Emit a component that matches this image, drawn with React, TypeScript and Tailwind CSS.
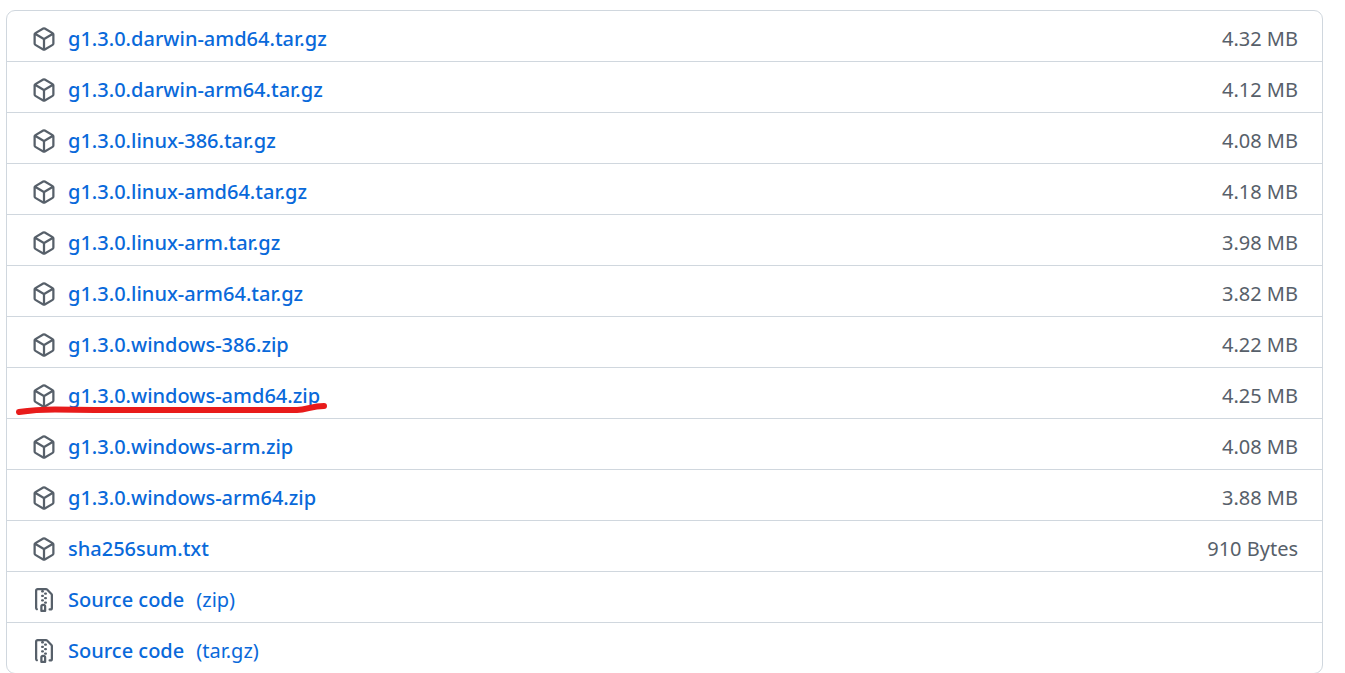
import React from 'react';

interface Asset {
  name: string;
  size?: string;
  format?: string;
  marked?: boolean;
}

const assets: Asset[] = [
  { name: 'g1.3.0.darwin-amd64.tar.gz', size: '4.32 MB' },
  { name: 'g1.3.0.darwin-arm64.tar.gz', size: '4.12 MB' },
  { name: 'g1.3.0.linux-386.tar.gz', size: '4.08 MB' },
  { name: 'g1.3.0.linux-amd64.tar.gz', size: '4.18 MB' },
  { name: 'g1.3.0.linux-arm.tar.gz', size: '3.98 MB' },
  { name: 'g1.3.0.linux-arm64.tar.gz', size: '3.82 MB' },
  { name: 'g1.3.0.windows-386.zip', size: '4.22 MB' },
  { name: 'g1.3.0.windows-amd64.zip', size: '4.25 MB', marked: true },
  { name: 'g1.3.0.windows-arm.zip', size: '4.08 MB' },
  { name: 'g1.3.0.windows-arm64.zip', size: '3.88 MB' },
  { name: 'sha256sum.txt', size: '910 Bytes' },
  { name: 'Source code', format: '(zip)' },
  { name: 'Source code', format: '(tar.gz)' },
];

const PackageIcon: React.FC = () => (
  <svg viewBox="0 0 16 16" fill="currentColor" aria-hidden="true" className="size-6 shrink-0 text-[#57606a]">
    <path d="m8.878.392 5.25 3.045c.54.314.872.89.872 1.514v6.098a1.75 1.75 0 0 1-.872 1.514l-5.25 3.045a1.75 1.75 0 0 1-1.756 0l-5.25-3.045A1.75 1.75 0 0 1 1 11.049V4.951c0-.624.332-1.201.872-1.514L7.122.392a1.75 1.75 0 0 1 1.756 0ZM7.875 1.69l-4.63 2.685L8 7.133l4.755-2.758-4.63-2.685a.248.248 0 0 0-.25 0ZM2.5 5.677v5.372c0 .09.047.171.125.216l4.625 2.683V8.432Zm6.25 8.271 4.625-2.683a.25.25 0 0 0 .125-.216V5.677L8.75 8.432Z" />
  </svg>
);

const FileZipIcon: React.FC = () => (
  <svg viewBox="0 0 16 16" fill="currentColor" aria-hidden="true" className="size-6 shrink-0 text-[#57606a]">
    <path d="M3.5 1.75v11.5c0 .09.048.173.126.217a.75.75 0 0 1-.752 1.298A1.748 1.748 0 0 1 2 13.25V1.75C2 .784 2.784 0 3.75 0h5.586c.464 0 .909.185 1.237.513l2.914 2.914c.329.328.513.773.513 1.237v8.586A1.75 1.75 0 0 1 12.25 15h-.5a.75.75 0 0 1 0-1.5h.5a.25.25 0 0 0 .25-.25V4.664a.25.25 0 0 0-.073-.177L9.513 1.573a.25.25 0 0 0-.177-.073H7.25a.75.75 0 0 1 0 1.5h-.5a.75.75 0 0 1 0-1.5h-3a.25.25 0 0 0-.25.25Zm3.75 8.75h.5c.966 0 1.75.784 1.75 1.75v3a.75.75 0 0 1-.75.75h-2.5a.75.75 0 0 1-.75-.75v-3c0-.966.784-1.75 1.75-1.75ZM6 5.25a.75.75 0 0 1 .75-.75h.5a.75.75 0 0 1 0 1.5h-.5A.75.75 0 0 1 6 5.25Zm.75 2.25h.5a.75.75 0 0 1 0 1.5h-.5a.75.75 0 0 1 0-1.5ZM8 6.75A.75.75 0 0 1 8.75 6h.5a.75.75 0 0 1 0 1.5h-.5A.75.75 0 0 1 8 6.75ZM8.75 3h.5a.75.75 0 0 1 0 1.5h-.5a.75.75 0 0 1 0-1.5ZM8 9.75A.75.75 0 0 1 8.75 9h.5a.75.75 0 0 1 0 1.5h-.5A.75.75 0 0 1 8 9.75Zm-1 2.5v2.25h1v-2.25a.25.25 0 0 0-.25-.25h-.5a.25.25 0 0 0-.25.25Z" />
  </svg>
);

// Hand-drawn red stroke under the asset to download
const Marker: React.FC = () => (
  <svg
    viewBox="0 0 312 14"
    fill="none"
    aria-hidden="true"
    className="pointer-events-none absolute left-2 top-[33px] h-[14px] w-[312px]"
  >
    <path
      d="M4 11C14 9.500 25 8.500 40 8.500L80 9H282C292 9 296 5 309 5"
      stroke="#e81b1b"
      strokeWidth="6"
      strokeLinecap="round"
      strokeLinejoin="round"
    />
  </svg>
);

export default function App() {
  return (
    <main className="min-h-screen bg-white pl-[6px] pr-[22px] pt-[10px] font-['Noto_Sans','Open_Sans',sans-serif] text-xl">
      <ul className="divide-y divide-[#d0d7de] rounded-[9px] border border-[#d0d7de]">
        {assets.map((asset) => (
          <li
            key={asset.name + (asset.format ?? '')}
            className="relative flex h-[51px] items-center gap-3 pl-[25px] pr-6 pt-[7px] pb-px last:h-[50px]"
          >
            {asset.format ? <FileZipIcon /> : <PackageIcon />}
            <a href="#" className="flex gap-3 text-[#0969da]">
              <span className="font-medium">{asset.name}</span>
              {asset.format && <span className="font-normal">{asset.format}</span>}
            </a>
            {asset.size && <span className="ml-auto font-normal text-[#57606a]">{asset.size}</span>}
            {asset.marked && <Marker />}
          </li>
        ))}
      </ul>
    </main>
  );
}
